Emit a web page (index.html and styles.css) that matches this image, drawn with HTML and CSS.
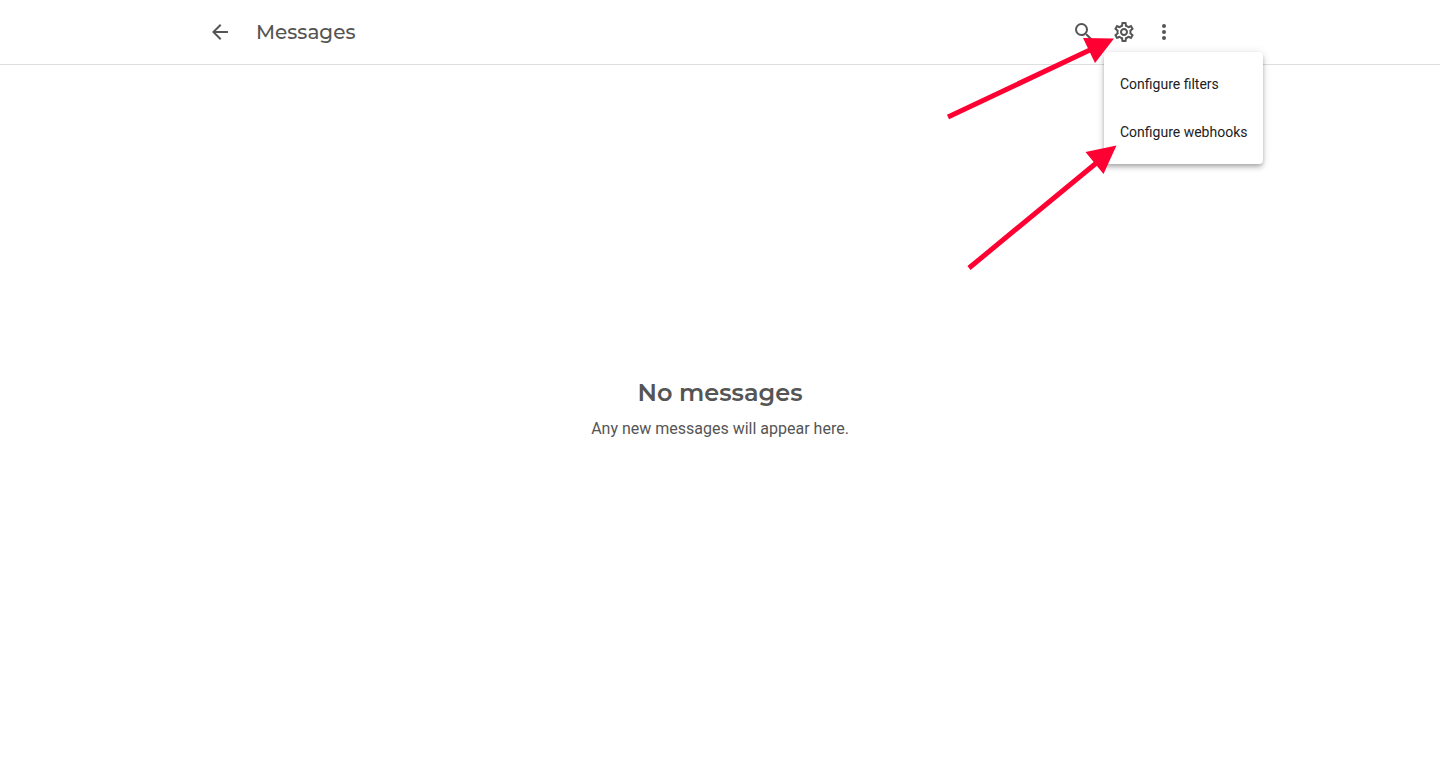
FILE: index.html
```html
<!DOCTYPE html>
<html lang="en">
<head>
<meta charset="utf-8">
<meta name="viewport" content="width=device-width, initial-scale=1">
<title>Messages</title>
<link rel="stylesheet" href="styles.css">
</head>
<body>
<header class="header">
  <div class="toolbar">
    <button class="icon-button" type="button" aria-label="Back">
      <svg class="icon" viewBox="0 0 24 24"><path d="M20 11H7.83l5.59-5.59L12 4l-8 8 8 8 1.41-1.41L7.83 13H20v-2z"/></svg>
    </button>
    <h1 class="title">Messages</h1>
    <div class="actions">
      <button class="icon-button" type="button" aria-label="Search">
        <svg class="icon" viewBox="0 0 24 24"><path d="M15.5 14h-.79l-.28-.27A6.471 6.471 0 0 0 16 9.500 6.500 6.500 0 1 0 9.500 16c1.610 0 3.090-.59 4.230-1.570l.27.28v.79l5 4.990L20.490 19l-4.990-5zm-6 0C7.010 14 5 11.990 5 9.500S7.010 5 9.500 5 14 7.010 14 9.500 11.990 14 9.500 14z"/></svg>
      </button>
      <div class="menu-anchor">
        <button class="icon-button" type="button" aria-label="Settings" aria-haspopup="menu" aria-expanded="true">
          <svg class="icon" viewBox="0 0 24 24"><path d="M19.43 12.98c.04-.32.07-.64.07-.98 0-.34-.03-.66-.07-.98l2.11-1.65c.19-.15.24-.42.12-.64l-2-3.46c-.09-.16-.26-.25-.44-.25-.06 0-.12.01-.17.03l-2.49 1c-.52-.4-1.08-.73-1.69-.98l-.38-2.65C14.46 2.180 14.250 2 14 2h-4c-.25 0-.46.18-.49.42l-.38 2.650c-.61.25-1.170.59-1.690.98l-2.490-1c-.06-.02-.12-.03-.18-.03-.17 0-.34.09-.43.25l-2 3.460c-.13.22-.07.49.12.64l2.110 1.650c-.04.32-.07.65-.07.98 0 .33.03.66.07.98l-2.110 1.650c-.19.15-.24.42-.12.64l2 3.460c.09.16.26.25.44.25.06 0 .12-.01.17-.03l2.490-1c.52.4 1.080.73 1.690.98l.38 2.650c.03.24.24.42.49.42h4c.25 0 .46-.18.49-.42l.38-2.650c.61-.25 1.170-.59 1.690-.98l2.490 1c.06.02.12.03.18.03.17 0 .34-.09.43-.25l2-3.460c.12-.22.07-.49-.12-.64l-2.110-1.650zm-1.980-1.710c.04.31.05.52.05.73 0 .21-.02.43-.05.73l-.14 1.130.89.7 1.080.84-.7 1.210-1.270-.51-1.040-.42-.9.68c-.43.32-.84.56-1.250.73l-1.060.43-.16 1.130-.2 1.350h-1.400l-.19-1.350-.16-1.130-1.060-.43c-.43-.18-.83-.41-1.230-.71l-.91-.7-1.060.43-1.270.51-.7-1.210 1.080-.84.89-.7-.14-1.130c-.03-.31-.05-.54-.05-.74s.02-.43.05-.73l.14-1.130-.89-.7-1.080-.84.7-1.210 1.270.51 1.040.42.9-.68c.43-.32.84-.56 1.250-.73l1.060-.43.16-1.130.2-1.350h1.390l.19 1.350.16 1.130 1.060.43c.43.18.83.41 1.230.71l.91.7 1.060-.43 1.270-.51.7 1.210-1.070.85-.89.7.14 1.130zM12 8c-2.210 0-4 1.790-4 4s1.790 4 4 4 4-1.790 4-4-1.790-4-4-4zm0 6c-1.100 0-2-.9-2-2s.9-2 2-2 2 .9 2 2-.9 2-2 2z"/></svg>
        </button>
        <div class="menu" role="menu">
          <button class="menu-item" type="button" role="menuitem">Configure filters</button>
          <button class="menu-item" type="button" role="menuitem">Configure webhooks</button>
        </div>
      </div>
      <button class="icon-button" type="button" aria-label="More options">
        <svg class="icon" viewBox="0 0 24 24"><circle cx="12" cy="6" r="2"/><circle cx="12" cy="12" r="2"/><circle cx="12" cy="18" r="2"/></svg>
      </button>
    </div>
    <svg class="arrows" viewBox="0 0 180 240" aria-hidden="true">
      <path class="shaft" d="M8 117 152 49M29 268 160 160"/>
      <path d="M174 38.500 143 38 155 63zM176.500 145.500 145.500 152 163.500 174z"/>
    </svg>
  </div>
</header>
<main class="empty">
  <h2 class="empty-title">No messages</h2>
  <p class="empty-text">Any new messages will appear here.</p>
</main>
</body>
</html>
```
FILE: styles.css
```css
* {
  box-sizing: border-box;
}

body {
  margin: 0;
  min-height: 100vh;
  display: flex;
  flex-direction: column;
  background: #fff;
  color: #555;
  font-family: Roboto, sans-serif;
}

button {
  border: 0;
  background: none;
  font: inherit;
  color: inherit;
  cursor: pointer;
}

.header {
  border-bottom: 1px solid #dedede;
}

.toolbar {
  position: relative;
  display: flex;
  align-items: center;
  max-width: 1040px;
  height: 64px;
  margin: 0 auto;
  padding-right: 56px;
}

.icon-button {
  display: flex;
  align-items: center;
  justify-content: center;
  width: 40px;
  height: 40px;
  padding: 0;
}

.icon {
  width: 24px;
  height: 24px;
  fill: #555;
}

.title {
  flex: 1;
  margin: 0 0 0 16px;
  font: 500 20px/32px Montserrat, Inter, sans-serif;
}

.actions {
  display: flex;
}

.menu-anchor {
  position: relative;
}

.menu {
  position: absolute;
  top: 100%;
  left: 0;
  z-index: 1;
  padding: 8px 0;
  border-radius: 4px;
  background: #fff;
  box-shadow: 0 2px 4px -1px rgba(0, 0, 0, .2), 0 4px 5px rgba(0, 0, 0, .14), 0 1px 10px rgba(0, 0, 0, .12);
}

.menu-item {
  display: block;
  width: 100%;
  padding: 0 16px;
  font-size: 14px;
  line-height: 48px;
  text-align: left;
  white-space: nowrap;
  color: #212121;
}

.arrows {
  position: absolute;
  top: 0;
  right: 120px;
  z-index: 2;
  width: 180px;
  height: 240px;
  overflow: visible;
  fill: #ff0033;
  pointer-events: none;
}

.shaft {
  fill: none;
  stroke: #ff0033;
  stroke-width: 5;
}

.empty {
  flex: 1;
  display: flex;
  flex-direction: column;
  align-items: center;
  justify-content: center;
  gap: 8px;
  padding: 0 16px 12px;
  text-align: center;
}

.empty-title {
  margin: 0;
  font: 600 24px/32px Montserrat, Inter, sans-serif;
}

.empty-text {
  margin: 0;
  font-size: 16px;
  line-height: 24px;
}
```
